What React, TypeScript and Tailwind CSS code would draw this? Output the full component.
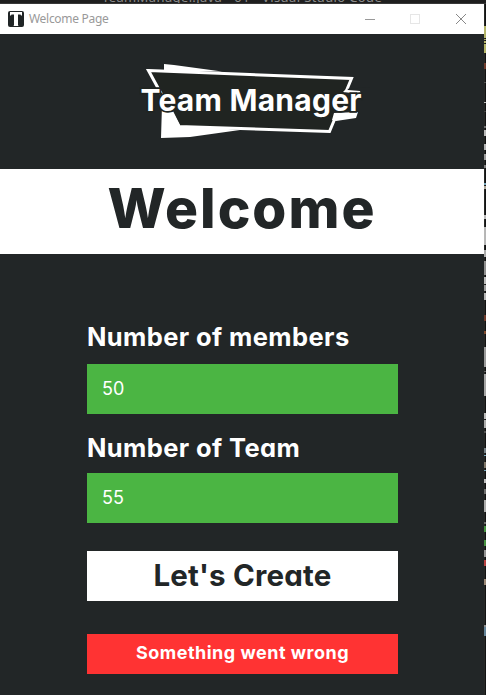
const edge: [number, number, string][] = [
  [26, 12, '#c3c470'], [39, 1, '#b5b66a'], [41, 2, '#c3c470'], [44, 9, '#c3c470'],
  [63, 6, '#7a4030'], [82, 1, '#555555'], [102, 1, '#cccccc'], [111, 1, '#444444'],
  [126, 2, '#777777'], [130, 6, '#c9c9c9'], [144, 6, '#c4c4c4'], [154, 6, '#aaaaaa'], [165, 3, '#888888'],
  [183, 2, '#7fb5cc'], [186, 3, '#c0b8a8'], [215, 4, '#cccccc'], [227, 18, '#c8c8c8'],
  [250, 7, '#bbbbbb'], [261, 14, '#9c9c9c'], [277, 7, '#cccccc'], [285, 6, '#aaaaaa'], [293, 7, '#c6c6c6'],
  [315, 6, '#7a4030'], [331, 3, '#8a5030'], [347, 20, '#a8a8a8'], [371, 1, '#666666'], [374, 22, '#b4b4b4'],
  [413, 6, '#cccccc'], [420, 8, '#bbbbbb'], [431, 2, '#555555'], [448, 5, '#7d8a90'], [455, 1, '#7fb5cc'],
  [462, 6, '#8a7f70'], [470, 1, '#7fb5cc'], [479, 4, '#cccccc'], [489, 5, '#777777'], [500, 12, '#bbbbbb'],
  [522, 2, '#777777'], [526, 6, '#4a9e45'], [540, 6, '#4a9e45'], [550, 7, '#a0a0a0'], [560, 6, '#c94545'],
  [579, 6, '#a89480'], [625, 2, '#999999'], [627, 9, '#6a8ea5'],
];

function EdgeStrip() {
  let y = 4;
  return (
    <div className="h-[691px] w-[2px] border-l border-[#4a4a46]/40 bg-[#121313]">
      {edge.map(([top, height, color]) => {
        const gap = top - y;
        y = top + height;
        return <div key={top} style={{ marginTop: gap, height, backgroundColor: color }} className="-ml-px w-[2px] opacity-90" />;
      })}
    </div>
  );
}

function AppIcon() {
  return (
    <svg width="16" height="16" viewBox="0 0 16 16" className="shrink-0">
      <rect width="16" height="16" rx="2" fill="#202526" />
      <path d="M2 1H14V4.5H13L12.5 3.5H10V14.5H10.5V15H5.5V14.5H6V3.5H3.5L3 4.5H2Z" fill="#fff" />
    </svg>
  );
}

function TitleBar() {
  return (
    <header className="flex h-[30px] items-center bg-white pl-2 text-[#999999]">
      <AppIcon />
      <span className="ml-[5px] whitespace-nowrap font-['Noto_Sans',sans-serif] text-[12px] tracking-[-0.3px]">Welcome Page</span>
      <svg width="104" height="12" viewBox="0 0 104 12" className="-mt-[1px] mr-[16px] ml-auto" fill="none">
        <path d="M1 6.5H11" stroke="#999" />
        <rect x="46.5" y="1.5" width="9" height="9" stroke="#e6e6e6" />
        <path d="M92 1L102 11M102 1L92 11" stroke="#888" />
      </svg>
    </header>
  );
}

function Logo() {
  return (
    <svg width="240" height="95" viewBox="0 0 240 95" className="ml-[130px]">
      <path d="M34 9L44 10L92 16.5L34 16Z" fill="#fff" />
      <path d="M32 50L43 58L50 70L110 75L60 82L31 83Z" fill="#fff" />
      <path d="M18.5 15.5L221.5 23.5L199.5 76.5L49 71.5Z" fill="#202421" stroke="#fff" strokeWidth="3" />
      <path d="M27 33L31 42L32 50L43 56L38 44Z" fill="#222627" />
      <path d="M43 56L50 70L32 70L32 50Z" fill="#fff" />
      <path d="M216 34L240 32V64H206L203 57Z" fill="#222627" />
      <path d="M217 33L213 37L231 39L230 36L218 35ZM204 58L228 57L226 63L206 66L202 65Z" fill="#fff" />
      <text x="10.5" y="56" textLength="221" lengthAdjust="spacing" fill="#fff" stroke="#202421" strokeWidth="3.5" paintOrder="stroke" className="font-['Inter',sans-serif] text-[30px] font-bold">Team Manager</text>
    </svg>
  );
}

const poppy = "font-['Inter',sans-serif] whitespace-nowrap [font-feature-settings:'cv11']";

export default function App() {
  return (
    <div className="h-[695px] w-[486px] overflow-hidden bg-[#202526]">
      <div className="h-1 overflow-hidden border-b border-[#383838] bg-[#1f1f1f] pl-[102px]">
        <span className="-mt-[10px] block h-[15px] whitespace-nowrap font-['Noto_Sans',sans-serif] text-[13px] leading-[15px] tracking-[0.38px] text-[#8c8c8c]">TeamManager.java - 01 - Visual Studio Code</span>
      </div>
      <div className="flex">
        <main className="h-[691px] w-[484px] bg-[#222627]">
          <TitleBar />
          <div className="h-[135px] pt-[21px]"><Logo /></div>
          <div className="flex h-[85px] justify-center bg-white">
            <h1 className={`${poppy} text-[55px] font-extrabold leading-[79px] tracking-[2px] text-[#222627]`}>Welcome</h1>
          </div>
          <form className="ml-[87px] flex w-[311px] flex-col pt-[66px]">
            <label className={`${poppy} h-[44px] text-[25.5px] font-bold leading-[34px] tracking-[0.4px] text-white`}>Number of members</label>
            <div className="flex h-[50px] items-center bg-[#4bb543] pb-[2px] pl-[15px] font-['Inter',sans-serif] text-[18px] text-white">50</div>
            <label className={`${poppy} mt-[17px] h-[42px] text-[25.5px] font-bold leading-[34px] tracking-[0.4px] text-white`}>Number of Team</label>
            <div className="flex h-[50px] items-center bg-[#4bb543] pb-[2px] pl-[15px] font-['Inter',sans-serif] text-[18px] text-white">55</div>
            <button type="button" className={`${poppy} mt-[28px] h-[50px] bg-white pb-[3px] text-[29.5px] font-bold leading-[46px] tracking-[0.2px] text-[#222627]`}>Let's Create</button>
            <div className={`${poppy} mt-[33px] h-[40px] bg-[#ff3333] text-center text-[18px] font-bold leading-[37px] tracking-[0.5px] text-white`}>Something went wrong</div>
          </form>
        </main>
        <EdgeStrip />
      </div>
    </div>
  );
}
